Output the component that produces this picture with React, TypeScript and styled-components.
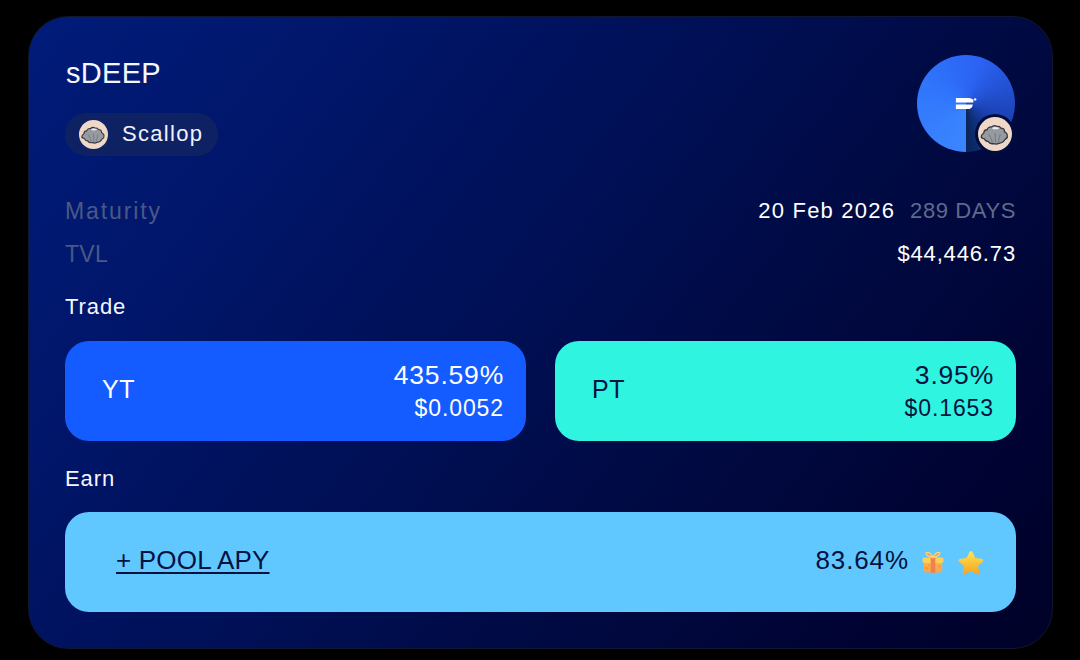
import React from "react";
import styled, { createGlobalStyle } from "styled-components";

const Global = createGlobalStyle`
  html, body { margin: 0; padding: 0; background: #000; width: 1080px; height: 660px; overflow: hidden; }
  * { box-sizing: border-box; }
`;
const Page = styled.div`
  width: 1080px; height: 660px; padding: 16px 27px 11px 28px; background: #000;
  font-family: "Liberation Sans", Arial, sans-serif;
`;
const Card = styled.div`
  height: 633px; border-radius: 40px; border: 1px solid #10162e; padding: 36px;
  background: linear-gradient(128deg, #001c7a 0%, #00166a 22%, #000f54 48%, #000a42 66%, #000230 90%, #000228 100%);
  display: flex; flex-direction: column; color: #fff;
`;
const Header = styled.div`display: flex; justify-content: space-between; align-items: flex-start; height: 136px; flex: none;`;
const HeadLeft = styled.div`display: flex; flex-direction: column; align-items: flex-start; padding-top: 3px;`;
const Title = styled.div`font-size: 29px; line-height: 34px; letter-spacing: 0.3px; margin-left: 1px; color: #f4f7ff;`;
const Chip = styled.div`
  margin-top: 23px; height: 43px; border-radius: 22px; padding: 0 15px 2px 14px; background: #0e2263;
  display: flex; align-items: center; gap: 14px; font-size: 22px; letter-spacing: 1.3px; color: #eef2ff;
`;
const ChipIcon = styled.span`display: flex; margin-top: 2px;`;
const Row = styled.div`display: flex; justify-content: space-between; align-items: center; height: 43px; font-size: 22px; flex: none;`;
const Muted = styled.span<{ $track: number }>`color: #4a5885; font-size: 23px; margin-top: 2px; letter-spacing: ${p => p.$track}px;`;
const Values = styled.div`display: flex; gap: 15px; letter-spacing: 0.85px;`;
const DateText = styled.span`letter-spacing: 1.2px;`;
const Days = styled.span`color: #5f6a8c; letter-spacing: 0.6px;`;
const Section = styled.div`font-size: 22px; line-height: 28px; letter-spacing: 0.9px; color: #f4f7ff; flex: none;`;
const TradeSection = styled(Section)`margin-top: 18px;`;
const TradeGrid = styled.div`display: grid; grid-template-columns: 461px 461px; justify-content: space-between; margin: 20px 0 24px; flex: none;`;
const TradeCard = styled.div<{ $bg: string; $fg: string }>`
  height: 100px; border-radius: 24px; background: ${p => p.$bg}; color: ${p => p.$fg};
  display: flex; justify-content: space-between; align-items: center; padding: 0 22px 0 37px;
`;
const TradeName = styled.div`font-size: 25px; letter-spacing: 0.6px; padding-bottom: 3px;`;
const Figures = styled.div`display: flex; flex-direction: column; align-items: flex-end; gap: 3px; padding-bottom: 1px;`;
const Apy = styled.div`font-size: 26.5px; line-height: 32px; letter-spacing: 0.8px;`;
const Price = styled.div`font-size: 23px; line-height: 28px; letter-spacing: 0.9px;`;
const Pool = styled.div`
  margin-top: 19px; height: 100px; border-radius: 24px; background: #61c8ff; color: #04123f; flex: none;
  display: flex; justify-content: space-between; align-items: center; padding: 0 31px 4px 51px;
  font-size: 26px;
`;
const PoolLink = styled.span`text-decoration: underline; text-underline-offset: 3px; text-decoration-thickness: 1.5px; letter-spacing: 0.2px;`;
const PoolRight = styled.div`display: flex; align-items: center; gap: 12px; letter-spacing: 0.9px;`;
const PoolIcon = styled.span`display: flex; margin-top: 4px;`;
const Avatar = styled.div`
  position: relative; width: 98px; height: 97px; margin: 2px 1px 0 0; border-radius: 50%;
  background: conic-gradient(from 180deg, #3b86ff 0deg, #3076fc 110deg, #2b62f2 200deg, #1c44b8 285deg, #0e3380 330deg, #082558 360deg);
  display: flex; align-items: center; justify-content: center;
`;
const Badge = styled.div`
  position: absolute; right: 0; bottom: -2px; width: 40px; height: 40px; border-radius: 50%;
  background: #000c3c; display: flex; align-items: center; justify-content: center;
`;

const Shell = ({ size }: { size: number }) => (
  <svg width={size} height={size} viewBox="0 0 32 32">
    <circle cx="16" cy="16" r="16" fill="#f0d8c8" />
    <path d="M3.500 20c-1-2 .5-4 2-5 0-2 1.500-3 3-3 .5-2 2.500-3 4-2.500 1.500-1.500 4-1.500 5.500-.5 1.500-.5 3 .5 3.500 1.500 2 0 3.500 1.500 3.500 3.500 1.500.5 3 2.500 2.500 4 .5 1.500-1 2.500-2 3-1 2-3 3.500-5 3.500l-3 1-3-.5c-2 .5-4-.5-5-2-2 0-3-1-3.500-2.500-1 0-2-.5-2.500-1.500z" fill="#969aa1" stroke="#34363d" strokeWidth="1.200" />
    <path d="M10 16c1.500 2 3 5 3.500 8M16 15c0 3 .3 6 .6 9M21 16c-.7 3-1.500 5-2 8" stroke="#6a6d74" strokeWidth="0.700" fill="none" />
    <path d="M13 10.500c2-1.500 5-1.500 7 0-2 1.500-5 1.500-7 0z" fill="#eceef0" />
  </svg>
);
const Gift = () => (
  <svg width="24" height="26" viewBox="0 0 26 26">
    <defs><linearGradient id="gb" x1="0" y1="0" x2="0" y2="1"><stop offset="0" stopColor="#fcb948" /><stop offset="1" stopColor="#f9a24e" /></linearGradient></defs>
    <rect x="3" y="10" width="20" height="14.500" rx="3.500" fill="url(#gb)" />
    <rect x="1.500" y="8" width="23" height="6" rx="2.500" fill="#fcd05a" />
    <rect x="10.500" y="8" width="5" height="16.500" fill="#f2804a" />
    <path d="M5 19l2 1M19 17l2 1M8 16l1 1" stroke="#ef7a52" strokeWidth="1.200" />
    <path d="M13 8C10 7.500 5.500 6 5.500 3c2.500-1.500 6 1 7.500 5zM13 8c3-.5 7.500-2 7.500-5-2.500-1.500-6 1-7.500 5z" fill="#f59a4a" stroke="#fcd878" strokeWidth="1.300" />
  </svg>
);
const Star = () => (
  <svg width="28" height="26" viewBox="0 0 28 26">
    <defs><linearGradient id="st" x1="0" y1="0" x2="0" y2="1"><stop offset="0" stopColor="#ffe14f" /><stop offset="1" stopColor="#f6a723" /></linearGradient></defs>
    <path d="M14 3.500l3.400 6.800 7.500 1.100-5.400 5.300 1.300 7.300-6.800-3.600-6.800 3.600 1.300-7.300-5.400-5.300 7.500-1.100z" fill="url(#st)" stroke="url(#st)" strokeWidth="3" strokeLinejoin="round" />
  </svg>
);

export default function App() {
  return (
    <Page>
      <Global />
      <Card>
        <Header>
          <HeadLeft>
            <Title>sDEEP</Title>
            <Chip><ChipIcon><Shell size={29} /></ChipIcon>Scallop</Chip>
          </HeadLeft>
          <Avatar>
            <svg width="22" height="11" viewBox="0 0 24 12">
              <path d="M1 0h15l4 1.500V5H1zM1 7h18.500l-1 3L16 12H1z" fill="#fff" />
              <circle cx="22" cy="1.500" r="1.300" fill="#fff" />
            </svg>
            <Badge><Shell size={34} /></Badge>
          </Avatar>
        </Header>
        <Row>
          <Muted $track={1.9}>Maturity</Muted>
          <Values><DateText>20 Feb 2026</DateText><Days>289 DAYS</Days></Values>
        </Row>
        <Row>
          <Muted $track={0.3}>TVL</Muted>
          <Values>$44,446.73</Values>
        </Row>
        <TradeSection>Trade</TradeSection>
        <TradeGrid>
          <TradeCard $bg="#145cff" $fg="#fff">
            <TradeName>YT</TradeName>
            <Figures><Apy>435.59%</Apy><Price>$0.0052</Price></Figures>
          </TradeCard>
          <TradeCard $bg="#2ff5e0" $fg="#04123f">
            <TradeName>PT</TradeName>
            <Figures><Apy>3.95%</Apy><Price>$0.1653</Price></Figures>
          </TradeCard>
        </TradeGrid>
        <Section>Earn</Section>
        <Pool>
          <PoolLink>+ POOL APY</PoolLink>
          <PoolRight>83.64%<PoolIcon><Gift /></PoolIcon><PoolIcon><Star /></PoolIcon></PoolRight>
        </Pool>
      </Card>
    </Page>
  );
}
